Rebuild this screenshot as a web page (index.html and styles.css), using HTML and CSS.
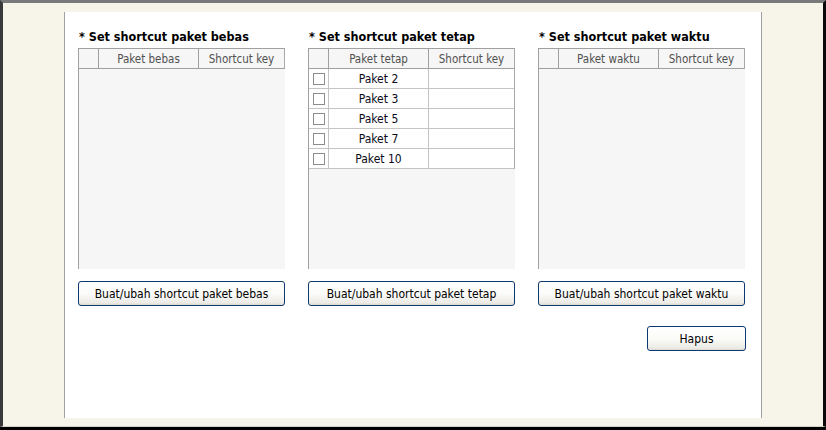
FILE: index.html
```html
<!DOCTYPE html>
<html>
<head>
<meta charset="utf-8">
<link rel="stylesheet" href="styles.css">
</head>
<body>
<div class="frame">
  <div class="panel">
    <div class="columns">
      <div class="group">
        <div class="title">* Set shortcut paket bebas</div>
        <div class="grid">
          <div class="row head">
            <div class="c1"></div><div class="c2">Paket bebas</div><div class="c3">Shortcut key</div>
          </div>
        </div>
        <button class="btn wide">Buat/ubah shortcut paket bebas</button>
      </div>
      <div class="group">
        <div class="title">* Set shortcut paket tetap</div>
        <div class="grid">
          <div class="row head">
            <div class="c1"></div><div class="c2">Paket tetap</div><div class="c3">Shortcut key</div>
          </div>
          <div class="row item"><div class="c1"><span class="check"></span></div><div class="c2">Paket 2</div><div class="c3"></div></div>
          <div class="row item"><div class="c1"><span class="check"></span></div><div class="c2">Paket 3</div><div class="c3"></div></div>
          <div class="row item"><div class="c1"><span class="check"></span></div><div class="c2">Paket 5</div><div class="c3"></div></div>
          <div class="row item"><div class="c1"><span class="check"></span></div><div class="c2">Paket 7</div><div class="c3"></div></div>
          <div class="row item"><div class="c1"><span class="check"></span></div><div class="c2">Paket 10</div><div class="c3"></div></div>
        </div>
        <button class="btn wide">Buat/ubah shortcut paket tetap</button>
      </div>
      <div class="group">
        <div class="title">* Set shortcut paket waktu</div>
        <div class="grid">
          <div class="row head">
            <div class="c1"></div><div class="c2">Paket waktu</div><div class="c3">Shortcut key</div>
          </div>
        </div>
        <button class="btn wide">Buat/ubah shortcut paket waktu</button>
      </div>
    </div>
    <div class="actions">
      <button class="btn small">Hapus</button>
    </div>
  </div>
</div>
</body>
</html>
```
FILE: styles.css
```css
html, body {
  margin: 0;
  padding: 0;
  background: #000;
}
body {
  width: 826px;
  height: 430px;
  overflow: hidden;
  font-family: "DejaVu Sans Condensed", "DejaVu Sans", sans-serif;
}
.frame {
  box-sizing: border-box;
  width: 826px;
  height: 427px;
  background: #f7f5e9;
  border-top: 3px solid #7a7a7a;
  border-left: 3px solid #3a3a3a;
  border-right: 3px solid #0a0a0a;
  border-bottom: 1px solid #d6d3c4;
  padding: 9px 0 0 61px;
}
.panel {
  box-sizing: border-box;
  width: 698px;
  height: 406px;
  background: #fff;
  border-left: 1px solid #a0a0a0;
  border-right: 1px solid #a0a0a0;
  padding: 15px 0 0 13px;
}
.columns {
  display: grid;
  grid-template-columns: 207px 207px 207px;
  column-gap: 23px;
}
.group {
  display: flex;
  flex-direction: column;
}
.title {
  box-sizing: border-box;
  font-weight: bold;
  font-size: 12.5px;
  line-height: 16px;
  height: 21px;
  padding-top: 2px;
  color: #000;
  padding-left: 1px;
}
.grid {
  box-sizing: border-box;
  height: 221px;
  width: 207px;
  background: #f6f6f6;
  border-left: 1px solid #a0a0a0;
}
.row {
  display: flex;
  height: 20px;
  box-sizing: border-box;
  border-right: 1px solid #a8a8a8;
  border-bottom: 1px solid #c4c4c4;
}
.row.head {
  height: 21px;
  border-top: 1px solid #a0a0a0;
  border-bottom: 1px solid #a0a0a0;
  color: #505050;
  font-size: 11.5px;
}
.row.item {
  background: #fff;
  color: #0a0a1a;
  font-size: 12px;
}
.c1, .c2, .c3 {
  box-sizing: border-box;
  display: flex;
  align-items: center;
  justify-content: center;
}
.c1 {
  width: 20px;
  border-right: 1px solid #c4c4c4;
  justify-content: flex-start;
  padding-left: 4px;
}
.c2 {
  width: 100px;
  border-right: 1px solid #c4c4c4;
}
.c3 {
  flex: 1;
}
.head .c1, .head .c2 {
  border-right-color: #a0a0a0;
}
.check {
  box-sizing: border-box;
  width: 12px;
  height: 12px;
  border: 1px solid #8c8c8c;
  background: #fff;
}
.btn {
  box-sizing: border-box;
  height: 25px;
  border: 1px solid #0d3a6e;
  border-radius: 3px;
  background: linear-gradient(#ffffff 0%, #fbfbf9 50%, #ecebe6 90%, #dcdad2 100%);
  font-family: "DejaVu Sans Condensed", "DejaVu Sans", sans-serif;
  font-size: 12px;
  color: #000;
  padding: 0;
}
.btn.wide {
  width: 207px;
  margin-top: 12px;
}
.actions {
  display: flex;
  justify-content: flex-end;
  width: 668px;
  margin-top: 20px;
}
.btn.small {
  width: 99px;
}
```
